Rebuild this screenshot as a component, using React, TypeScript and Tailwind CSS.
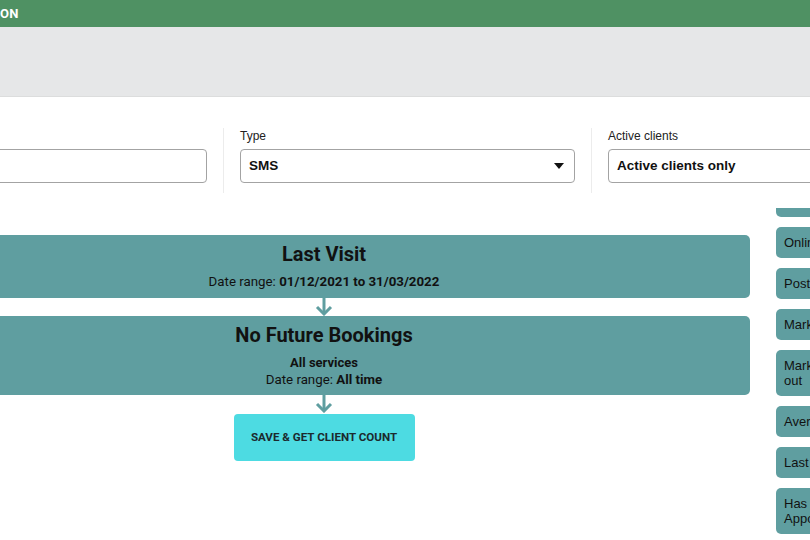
import React from "react";

const Arrow = () => (
  <div className="flex justify-center h-[18px]">
    <svg width="20" height="18" viewBox="0 0 20 18" fill="none">
      <path d="M10 0 V16" stroke="#5f9ea0" strokeWidth="3" />
      <path d="M3 9 L10 16 L17 9" stroke="#5f9ea0" strokeWidth="3" fill="none" />
    </svg>
  </div>
);

const sideItems = [
  "Birthday",
  "Online booking",
  "Postcode",
  "Marketing",
  "Marketing opt out",
  "Average spend",
  "Last visit",
  "Has Appointment",
];

export default function App() {
  return (
    <div className="w-[810px] h-[540px] overflow-hidden bg-white relative">
      <div className="h-[27px] bg-[#4f9163] flex items-center">
        <span className="text-white font-bold text-[13px] font-['Roboto',sans-serif] tracking-wide">ON</span>
      </div>
      <div className="h-[70px] bg-[#e6e7e8] border-b border-[#dcdddd]" />

      <div className="flex -ml-[144px] mt-[31px] font-['Liberation_Sans',Arial,sans-serif]">
        {[
          { label: "", value: "", caret: false },
          { label: "Type", value: "SMS", caret: true },
          { label: "Active clients", value: "Active clients only", caret: true },
        ].map((c, i) => (
          <div
            key={i}
            className={`w-[368px] shrink-0 px-4 pb-[10px] ${i < 2 ? "border-r border-[#ececec]" : ""}`}
          >
            <div className="h-4 text-[12px] leading-4 text-[#222]">{c.label}</div>
            <div className="mt-[5px] h-[34px] border border-[#a3a3a3] rounded-[4px] flex items-center px-2 justify-between">
              <span className="text-[13.5px] font-bold text-[#111]">{c.value}</span>
              {c.caret && (
                <svg width="10" height="6" viewBox="0 0 10 6" className="mr-[2px]">
                  <path d="M0 0 H10 L5 6 Z" fill="#111" />
                </svg>
              )}
            </div>
          </div>
        ))}
      </div>

      <div className="flex items-start">
        <div className="-ml-[102px] w-[852px] shrink-0 mt-[42px] font-['Roboto',sans-serif] text-[#111]">
          <div className="bg-[#5f9ea0] rounded-[5px] pt-[5px] pb-[7px] flex flex-col items-center">
            <div className="text-[20px] leading-[28px] font-bold">Last Visit</div>
            <div className="mt-[5px] text-[13.3px] leading-[18px]">
              Date range: <span className="font-bold">01/12/2021 to 31/03/2022</span>
            </div>
          </div>
          <Arrow />
          <div className="bg-[#5f9ea0] rounded-[5px] pt-[5px] pb-[7px] flex flex-col items-center">
            <div className="text-[20px] leading-[28px] font-bold">No Future Bookings</div>
            <div className="mt-[5px] text-[13px] leading-[17px] font-bold">All services</div>
            <div className="text-[13.3px] leading-[17px]">
              Date range: <span className="font-bold">All time</span>
            </div>
          </div>
          <Arrow />
          <div className="flex justify-center mt-[1px]">
            <button className="w-[181px] h-[47px] bg-[#4ddbe2] rounded-[4px] text-[11.6px] font-bold text-[#1c2a2e] uppercase">
              Save &amp; Get Client Count
            </button>
          </div>
        </div>

        <div className="ml-[26px] mt-[15px] w-[110px] shrink-0 h-[340px] overflow-hidden font-['Liberation_Sans',Arial,sans-serif]">
          <div className="-mt-[22px] flex flex-col gap-[10px]">
            {sideItems.map((s) => (
              <div
                key={s}
                className="bg-[#5f9ea0] rounded-[5px] px-2 py-2 text-[13px] leading-[15px] text-[#111]"
              >
                {s}
              </div>
            ))}
          </div>
        </div>
      </div>
    </div>
  );
}
